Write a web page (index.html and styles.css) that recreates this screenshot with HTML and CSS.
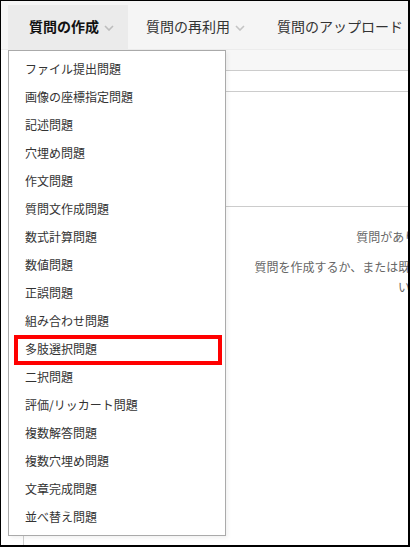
FILE: index.html
```html
<!DOCTYPE html>
<html lang="ja">
<head>
<meta charset="utf-8">
<title>質問の作成</title>
<link rel="stylesheet" href="styles.css">
</head>
<body>
<div class="frame">
  <nav class="nav">
    <div class="tab tab-active tab-first">
      <span class="tab-label">質問の作成</span>
      <svg class="chev" width="10" height="6" viewBox="0 0 10 6"><polyline points="1,1 5,5 9,1" fill="none" stroke="#bdbdbd" stroke-width="1.6"/></svg>
    </div>
    <div class="tab">
      <span class="tab-label">質問の再利用</span>
      <svg class="chev" width="10" height="6" viewBox="0 0 10 6"><polyline points="1,1 5,5 9,1" fill="none" stroke="#c4c4c4" stroke-width="1.6"/></svg>
    </div>
    <div class="tab">
      <span class="tab-label">質問のアップロード</span>
    </div>
  </nav>

  <div class="main">
    <div class="main-head"></div>
    <div class="main-row"></div>
    <div class="main-space"></div>
    <div class="message">
      <p class="msg-title">質問がありません。</p>
      <p class="msg-body">質問を作成するか、または既存の質問を再利用してください。</p>
    </div>
  </div>

  <ul class="menu">
    <li class="menu-item">ファイル提出問題</li>
    <li class="menu-item">画像の座標指定問題</li>
    <li class="menu-item">記述問題</li>
    <li class="menu-item">穴埋め問題</li>
    <li class="menu-item">作文問題</li>
    <li class="menu-item">質問文作成問題</li>
    <li class="menu-item">数式計算問題</li>
    <li class="menu-item">数値問題</li>
    <li class="menu-item">正誤問題</li>
    <li class="menu-item">組み合わせ問題</li>
    <li class="menu-item menu-item-marked">多肢選択問題<span class="highlight"></span></li>
    <li class="menu-item">二択問題</li>
    <li class="menu-item">評価/リッカート問題</li>
    <li class="menu-item">複数解答問題</li>
    <li class="menu-item">複数穴埋め問題</li>
    <li class="menu-item">文章完成問題</li>
    <li class="menu-item">並べ替え問題</li>
  </ul>
</div>
</body>
</html>
```

FILE: styles.css
```css
* { box-sizing: border-box; }

html, body {
  margin: 0;
  padding: 0;
  background: #ffffff;
}

body {
  font-family: "Noto Sans CJK JP", "Noto Sans", sans-serif;
  color: #333333;
}

.frame {
  position: relative;
  width: 410px;
  height: 547px;
  border-style: solid;
  border-color: #000000;
  border-width: 1px 2px 2px 1px;
  overflow: hidden;
  background: #ffffff;
}

.nav {
  display: flex;
  align-items: stretch;
  height: 49px;
  padding: 4px 0 0 7px;
  background: #f5f5f5;
  border-bottom: 1px solid #ececec;
}

.tab {
  display: flex;
  align-items: center;
  gap: 5px;
  padding: 0 14px 2px 18px;
  font-size: 14px;
  color: #333333;
  white-space: nowrap;
}

.tab-first {
  padding-left: 21px;
}

.tab-active {
  background: #ebebeb;
  font-weight: bold;
  color: #111111;
}

.tab-label {
  line-height: 20px;
}

.chev {
  display: block;
  margin-top: 3px;
}

.main {
  margin-left: 22px;
  width: 773px;
  border-left: 1px solid #cfcfcf;
  height: 500px;
}

.main-head {
  height: 21px;
  background: #f7f7f7;
  border-bottom: 1px solid #cccccc;
}

.main-row {
  height: 21px;
  border-bottom: 1px solid #cccccc;
}

.main-space {
  height: 115px;
  border-bottom: 1px solid #cccccc;
}

.message {
  padding-top: 20px;
  text-align: center;
  font-size: 12px;
  color: #666666;
}

.message p {
  margin: 0 auto;
  line-height: 20px;
  max-width: 314px;
}

.msg-body {
  margin-top: 10px !important;
}

.menu {
  position: absolute;
  left: 7px;
  top: 49px;
  width: 218px;
  margin: 0;
  padding: 4px 0;
  list-style: none;
  background: #ffffff;
  border: 1px solid #aaaaaa;
  box-shadow: 2px 2px 4px rgba(0, 0, 0, 0.06);
}

.menu-item {
  position: relative;
  height: 28px;
  line-height: 28px;
  padding-left: 16px;
  font-size: 12px;
  color: #333333;
  white-space: nowrap;
}

.highlight {
  position: absolute;
  left: 5px;
  top: 0;
  width: 208px;
  height: 30px;
  border: 4px solid #ff0000;
}
```
